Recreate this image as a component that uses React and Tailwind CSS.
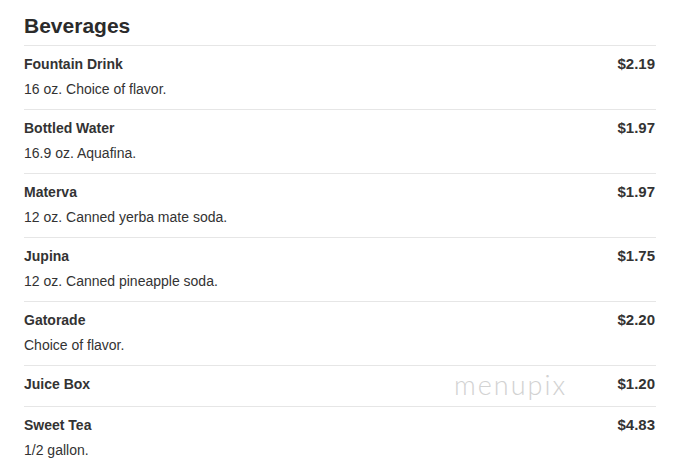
import React from "react";

const items = [
  { name: "Fountain Drink", desc: "16 oz. Choice of flavor.", price: "$2.19" },
  { name: "Bottled Water", desc: "16.9 oz. Aquafina.", price: "$1.97" },
  { name: "Materva", desc: "12 oz. Canned yerba mate soda.", price: "$1.97" },
  { name: "Jupina", desc: "12 oz. Canned pineapple soda.", price: "$1.75" },
  { name: "Gatorade", desc: "Choice of flavor.", price: "$2.20" },
  { name: "Juice Box", desc: null, price: "$1.20", mark: true },
  { name: "Sweet Tea", desc: "1/2 gallon.", price: "$4.83" },
];

const App = () => {
  return (
    <div className="w-[687px] h-[468px] overflow-hidden bg-white text-[#333] font-['Liberation_Sans',Arial,sans-serif]">
      <div className="ml-[24px] w-[632px]">
        {/* Section title */}
        <h2 className="pt-[12px] pb-[5px] text-[21px] leading-[28px] font-bold text-[#2b2b2b]">
          Beverages
        </h2>

        {/* Items */}
        <ul>
          {items.map((item) => (
            <li
              key={item.name}
              className="relative flex justify-between border-t border-[#e6e6e6] pt-[9px] pb-[11px]"
            >
              <div>
                <p className="text-[14px] leading-[18px] font-bold mb-[2px]">{item.name}</p>
                {item.desc && (
                  <p className="text-[14px] leading-[18px] mt-[7px]">{item.desc}</p>
                )}
              </div>
              <span className="text-[15px] leading-[18px] font-bold pr-px">{item.price}</span>
              {item.mark && (
                <span className="absolute left-[430px] top-[2px] font-['Lato',sans-serif] font-light text-[27px] leading-[34px] tracking-[2px] text-[#d2d2d2] select-none">
                  menupix
                </span>
              )}
            </li>
          ))}
        </ul>
      </div>
    </div>
  );
};

export default App;
